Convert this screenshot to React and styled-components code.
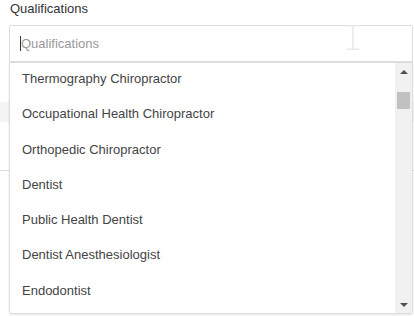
import React from 'react';
import styled, { createGlobalStyle } from 'styled-components';

const GlobalStyle = createGlobalStyle`
  html, body { margin: 0; padding: 0; background: #fff; }
  body { font-family: "Liberation Sans", Arial, sans-serif; }
`;

const items = [
  'Thermography Chiropractor',
  'Occupational Health Chiropractor',
  'Orthopedic Chiropractor',
  'Dentist',
  'Public Health Dentist',
  'Dentist Anesthesiologist',
  'Endodontist',
];

export default function App() {
  return (
    <Page>
      <GlobalStyle />
      <Label>Qualifications</Label>
      <Field>
        <Caret />
        <Placeholder>Qualifications</Placeholder>
        <IBeam width="14" height="25" viewBox="0 0 14 25">
          <path d="M1 0.75h12M7 0.5v24M1 24.25h12" stroke="#e8e8e8" strokeWidth="1.5" fill="none" />
        </IBeam>
      </Field>
      <Behind>
        <GrayBand />
        <Divider $top={48} />
      </Behind>
      <Menu>
        <List>
          {items.map((t) => (
            <Item key={t}>{t}</Item>
          ))}
        </List>
        <Scrollbar>
          <Arrow $up />
          <Track>
            <Thumb />
          </Track>
          <Arrow />
        </Scrollbar>
      </Menu>
    </Page>
  );
}

const Page = styled.div`
  position: relative;
  width: 414px;
  height: 316px;
  overflow: hidden;
`;

const Label = styled.div`
  padding: 1px 0 0 10px;
  height: 25px;
  box-sizing: border-box;
  font-size: 13px;
  line-height: 15px;
  color: #333;
`;

const Field = styled.div`
  position: relative;
  margin-left: 9px;
  width: 404px;
  height: 37px;
  box-sizing: border-box;
  border: 1px solid #ddd;
  border-radius: 2px 2px 0 0;
  display: flex;
  align-items: center;
  padding-left: 10px;
`;

const Caret = styled.span`
  width: 1px;
  height: 15px;
  background: #333;
`;

const Placeholder = styled.span`
  font-size: 13px;
  color: #999;
`;

const IBeam = styled.svg`
  position: absolute;
  left: 336px;
  top: -1px;
`;

const Behind = styled.div`
  padding-top: 40px;
`;

const GrayBand = styled.div`
  height: 20px;
  background: #f4f4f4;
`;

const Divider = styled.div`
  margin-top: ${(p) => p.$top}px;
  height: 1px;
  background: #ddd;
`;

const Menu = styled.div`
  position: absolute;
  top: 62px;
  left: 9px;
  width: 404px;
  height: 252px;
  box-sizing: border-box;
  border: 1px solid #ddd;
  border-radius: 0 0 3px 3px;
  background: #fff;
  box-shadow: 0 2px 3px rgba(0, 0, 0, 0.08);
  display: flex;
  overflow: hidden;
`;

const List = styled.div`
  flex: 1;
  display: flex;
  flex-direction: column;
  margin-top: -2px;
`;

const Item = styled.div`
  height: 35.25px;
  flex-shrink: 0;
  display: flex;
  align-items: center;
  padding-left: 12px;
  font-size: 13px;
  color: #444;
  white-space: nowrap;
`;

const Scrollbar = styled.div`
  width: 17px;
  background: #f1f1f1;
  display: flex;
  flex-direction: column;
`;

const Arrow = styled.div`
  height: 17px;
  display: flex;
  align-items: center;
  justify-content: center;
  &::before {
    content: '';
    border-left: 4px solid transparent;
    border-right: 4px solid transparent;
    ${(p) => (p.$up ? 'border-bottom: 4px solid #505050;' : 'border-top: 4px solid #505050;')}
  }
`;

const Track = styled.div`
  flex: 1;
  padding: 12px 2px 0;
`;

const Thumb = styled.div`
  height: 17px;
  background: #c1c1c1;
`;
